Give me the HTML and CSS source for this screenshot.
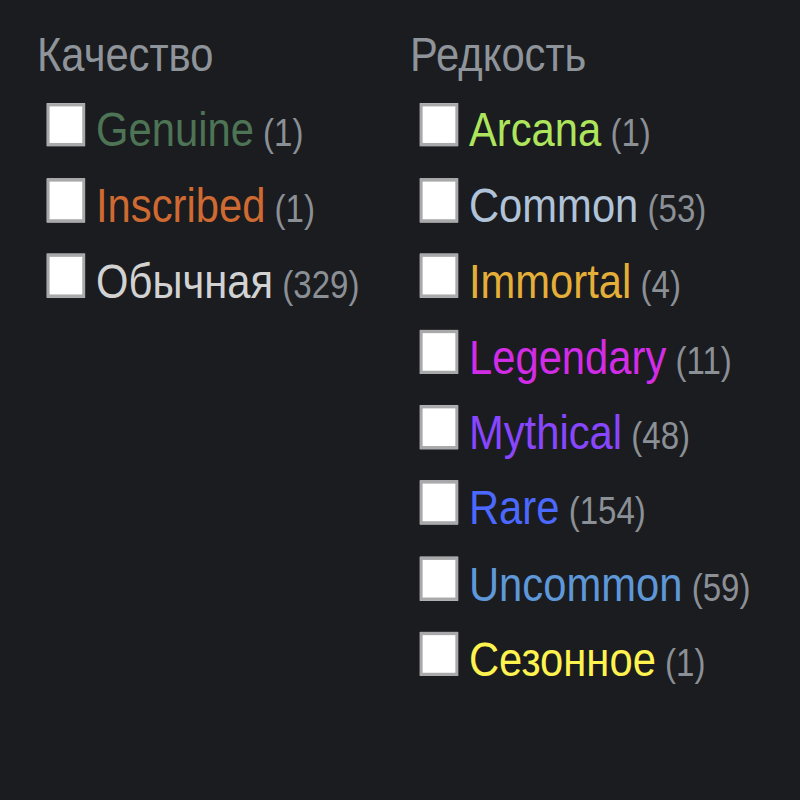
FILE: index.html
```html
<!DOCTYPE html>
<html lang="ru">
<head>
<meta charset="utf-8">
<title>Фильтры</title>
<link rel="stylesheet" href="styles.css">
</head>
<body>
<div class="filters">
  <div class="group group-quality">
    <div class="group-title">Качество</div>
    <label class="tag"><input type="checkbox" class="box"><span class="name q-genuine">Genuine</span><span class="count"> (1)</span></label>
    <label class="tag"><input type="checkbox" class="box"><span class="name q-inscribed">Inscribed</span><span class="count"> (1)</span></label>
    <label class="tag"><input type="checkbox" class="box"><span class="name q-unique">Обычная</span><span class="count"> (329)</span></label>
  </div>
  <div class="group group-rarity">
    <div class="group-title">Редкость</div>
    <label class="tag"><input type="checkbox" class="box"><span class="name r-arcana">Arcana</span><span class="count"> (1)</span></label>
    <label class="tag"><input type="checkbox" class="box"><span class="name r-common">Common</span><span class="count"> (53)</span></label>
    <label class="tag"><input type="checkbox" class="box"><span class="name r-immortal">Immortal</span><span class="count"> (4)</span></label>
    <label class="tag"><input type="checkbox" class="box"><span class="name r-legendary">Legendary</span><span class="count"> (11)</span></label>
    <label class="tag"><input type="checkbox" class="box"><span class="name r-mythical">Mythical</span><span class="count"> (48)</span></label>
    <label class="tag"><input type="checkbox" class="box"><span class="name r-rare">Rare</span><span class="count"> (154)</span></label>
    <label class="tag"><input type="checkbox" class="box"><span class="name r-uncommon">Uncommon</span><span class="count"> (59)</span></label>
    <label class="tag"><input type="checkbox" class="box"><span class="name r-seasonal">Сезонное</span><span class="count"> (1)</span></label>
  </div>
</div>
</body>
</html>
```

FILE: styles.css
```css
html, body {
  margin: 0;
  padding: 0;
  background: #1b1c1f;
  height: 100%;
  overflow: hidden;
}

/* The panel is drawn in a condensed style: glyphs are taller than wide */
.filters {
  display: flex;
  width: max-content;
  padding: 25.1px 0 0 39.6px;
  font-family: "Liberation Sans", Arial, sans-serif;
  transform: scale(0.935, 1.0747);
  transform-origin: 0 0;
}

.group {
  display: flex;
  flex-direction: column;
  flex-shrink: 0;
}

.group-quality {
  width: 398.9px;
}

.group-title {
  font-size: 44.66px;
  line-height: 52.1px;
  color: #8e949a;
  margin-bottom: 9.3px;
}

.tag {
  display: block;
  padding-left: 10.7px;
  font-size: 44.66px;
  line-height: 70.35px;
  white-space: nowrap;
}

.box {
  appearance: none;
  -webkit-appearance: none;
  display: inline-block;
  vertical-align: baseline;
  width: 40.6px;
  height: 40.9px;
  margin: 0 11.8px 0 0;
  background: #ffffff;
  border: 3px solid #a9a9ab;
  box-sizing: border-box;
}

.count {
  font-size: 35.36px;
  line-height: 1;
  color: #8b9096;
}

.q-genuine { color: #4d7455; }
.q-inscribed { color: #cf6a32; }
.q-unique { color: #d2d2d2; }

.r-arcana { color: #ade55c; }
.r-common { color: #b0c3d9; }
.r-immortal { color: #e4ae39; }
.r-legendary { color: #d32ce6; }
.r-mythical { color: #8847ff; }
.r-rare { color: #4b69ff; }
.r-uncommon { color: #5e98d9; }
.r-seasonal { color: #fff34f; }
```
